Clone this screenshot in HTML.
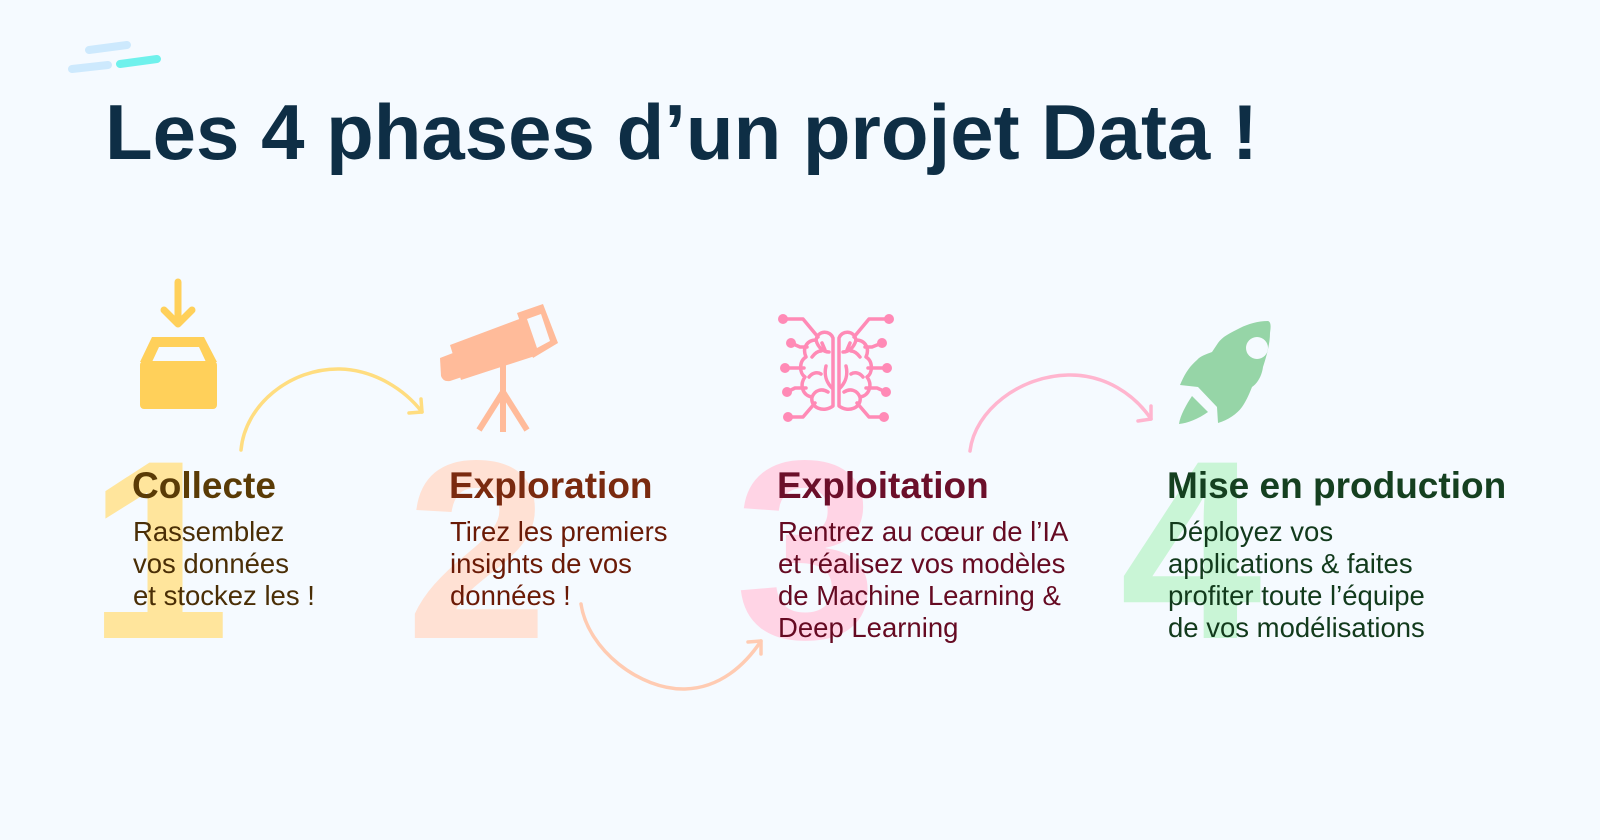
<!DOCTYPE html>
<html><head><meta charset="utf-8"><style>
html,body{margin:0;padding:0;}
body{width:1600px;height:840px;background:#f5faff;position:relative;overflow:hidden;font-family:"Liberation Sans",sans-serif;}
.t{position:absolute;left:105px;top:93px;font-size:78px;font-weight:bold;color:#0e2e45;white-space:nowrap;line-height:1;}
.n{position:absolute;font-size:255px;font-weight:bold;line-height:1;top:423px;}
.h{position:absolute;top:466px;font-size:37px;font-weight:bold;white-space:nowrap;line-height:1.1;}
.p{position:absolute;top:516px;font-size:27.5px;line-height:32px;white-space:nowrap;}
svg{position:absolute;left:0;top:0;}
</style></head><body>
<svg width="1600" height="840" viewBox="0 0 1600 840">
<g stroke-linecap="round" stroke-width="8" fill="none">
<line x1="89" y1="50" x2="127" y2="45" stroke="#cde9fd"/>
<line x1="72" y1="69" x2="108" y2="65" stroke="#cde9fd"/>
<line x1="120" y1="64" x2="157" y2="59" stroke="#6ff1ec"/>
</g>
</svg>
<div class="t">Les 4 phases d’un projet Data !</div>

<div class="n" style="left:88px;color:#ffe59c">1</div>
<div class="n" style="left:406px;color:#ffe1d4">2</div>
<div class="n" style="left:735px;color:#ffd4e5">3</div>
<div class="n" style="left:1120px;color:#c9f5d6">4</div>

<svg width="1600" height="840" viewBox="0 0 1600 840">
<!-- box -->
<g fill="#ffd05a">
<line x1="178" y1="282" x2="178" y2="322" stroke="#ffd05a" stroke-width="7" stroke-linecap="round"/>
<polyline points="164,310 178,324 192,310" fill="none" stroke="#ffd05a" stroke-width="7" stroke-linecap="round" stroke-linejoin="round"/>
<path d="M152,337 L204,337 L217,362 L140,362 Z M159,347 L152,362 L206,362 L199,347 Z" fill-rule="evenodd"/>
<rect x="140" y="361" width="77" height="48" rx="4"/>
</g>
<!-- telescope -->
<g fill="#ffbb9a">
<path d="M440,358 L453,353 L462,377 L450,381 Q443,382 441,376 Z"/>
<path d="M450,345 L522,318 L535,356 L461,380 Z"/>
<path d="M517,313 L543,304 L558,343 L533,358 Z M527,319 L541,314 L550,341 L537,348 Z" fill-rule="evenodd"/>
</g>
<g stroke="#ffbb9a" stroke-width="6" fill="none">
<line x1="503" y1="362" x2="503" y2="432"/>
<line x1="503" y1="392" x2="479" y2="430"/>
<line x1="503" y1="392" x2="527" y2="430"/>
</g>
<!-- brain -->
<g stroke="#ff8ab6" stroke-width="3.5" fill="none" stroke-linecap="round" stroke-linejoin="round">
<polyline points="783,319 803,319 818,337"/>
<polyline points="791,343 800,347 807,347"/>
<polyline points="785,368 804,368"/>
<polyline points="787,392 795,388 806,388"/>
<polyline points="788,417 803,417 815,403"/>
<polyline points="889,319 869,319 854,337"/>
<polyline points="882,343 872,347 865,347"/>
<polyline points="887,368 868,368"/>
<polyline points="886,392 877,388 866,388"/>
<polyline points="884,417 869,417 857,403"/>
<path d="M833,338 C830,330 818,330 816,340 C807,340 802,348 806,357 C799,361 799,373 805,377 C799,385 803,396 812,397 C810,408 824,413 833,406 Z"/>
<path d="M839,338 C842,330 854,330 856,340 C865,340 870,348 866,357 C873,361 873,373 867,377 C873,385 869,396 860,397 C862,408 848,413 839,406 Z"/>
<path d="M816,340 C818,348 824,352 829,352 M822,343 L825,350 M812,357 C815,353 818,351 821,351 M809,377 C813,372 818,372 821,374 M826,366 C824,374 826,382 832,388 M812,397 C815,390 822,388 828,392"/>
<path d="M856,340 C854,348 848,352 843,352 M850,343 L847,350 M860,357 C857,353 854,351 851,351 M863,377 C859,372 854,372 851,374 M846,366 C848,374 846,382 840,388 M860,397 C857,390 850,388 844,392"/>
</g>
<g fill="#ff8ab6">
<circle cx="783" cy="319" r="5"/><circle cx="791" cy="343" r="5"/><circle cx="785" cy="368" r="5"/><circle cx="787" cy="392" r="5"/><circle cx="788" cy="417" r="5"/>
<circle cx="889" cy="319" r="5"/><circle cx="882" cy="343" r="5"/><circle cx="887" cy="368" r="5"/><circle cx="886" cy="392" r="5"/><circle cx="884" cy="417" r="5"/>
</g>
<!-- rocket -->
<g fill="#96d5a7">
<path d="M1268,321 C1258,321 1248,324 1240,328 C1230,333 1222,337 1218,343 L1212,352 C1207,354 1200,356 1197,360 C1190,366 1185,373 1180,385 L1198,387 L1217,407 L1218,423 C1228,420 1237,414 1242,407 C1246,401 1248,397 1252,387 C1258,383 1262,375 1263,367 C1267,355 1270,343 1270,333 C1271,326 1271,322 1268,321 Z"/>
<path d="M1192,396 L1208,412 C1198,419 1188,423 1179,424 C1180,416 1186,405 1192,396 Z"/>
</g>
<circle cx="1257" cy="348" r="11" fill="#f5faff"/>
<!-- arrows -->
<g fill="none" stroke-width="3.5" stroke-linecap="round" stroke-linejoin="round">
<path d="M241,450 C245,405 290,368 340,369 C375,370 405,390 422,412" stroke="#ffdd80"/>
<polyline points="409,413 422,412 421,399" stroke="#ffdd80"/>
<path d="M581,604 C588,650 640,690 685,689 C720,688 745,665 761,641" stroke="#ffcbb2"/>
<polyline points="748,642 761,641 761,654" stroke="#ffcbb2"/>
<path d="M970,451 C975,410 1020,376 1068,375 C1105,374 1135,395 1151,419" stroke="#ffb5cf"/>
<polyline points="1138,421 1151,419 1151,406" stroke="#ffb5cf"/>
</g>
</svg>

<div class="h" style="left:132px;color:#5a3b06">Collecte</div>
<div class="p" style="left:133px;color:#4a2e06">Rassemblez<br>vos données<br>et stockez les !</div>
<div class="h" style="left:449px;color:#7a2a0f">Exploration</div>
<div class="p" style="left:450px;color:#6a1a06">Tirez les premiers<br>insights de vos<br>données !</div>
<div class="h" style="left:777px;color:#6b0f2a">Exploitation</div>
<div class="p" style="left:778px;color:#650a22">Rentrez au cœur de l’IA<br>et réalisez vos modèles<br>de Machine Learning &amp;<br>Deep Learning</div>
<div class="h" style="left:1167px;color:#154020">Mise en production</div>
<div class="p" style="left:1168px;color:#123a1c">Déployez vos<br>applications &amp; faites<br>profiter toute l’équipe<br>de vos modélisations</div>
</body></html>
